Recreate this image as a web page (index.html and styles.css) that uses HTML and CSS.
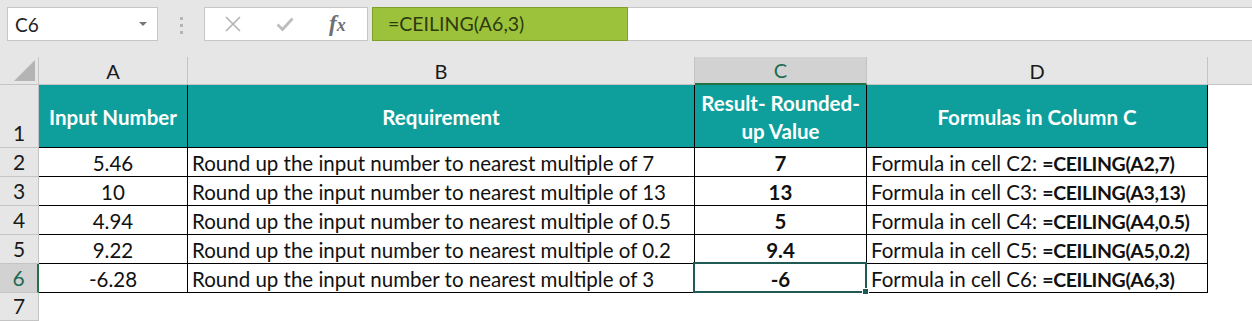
FILE: index.html
```html
<!DOCTYPE html>
<html lang="en">
<head>
    <meta charset="UTF-8">
    <meta name="viewport" content="width=device-width, initial-scale=1.0">
    <title>CEILING examples</title>
    <link rel="stylesheet" href="styles.css">
</head>
<body>
    <!-- Name box and formula bar -->
    <header class="toolbar">
        <div class="namebox">
            <span>C6</span>
            <span class="caret"></span>
        </div>
        <div class="grip"><i></i><i></i><i></i></div>
        <div class="fx-buttons">
            <svg class="icon" width="18" height="18" viewBox="0 0 18 18">
                <path d="M2 2 L16 16 M16 2 L2 16" stroke="#b3b3b3" stroke-width="1.6" fill="none"/>
            </svg>
            <svg class="icon" width="18" height="18" viewBox="0 0 18 18">
                <path d="M1.5 9.5 L6.5 14.5 L16.5 3.5" stroke="#bdbdbd" stroke-width="2.8" fill="none"/>
            </svg>
            <span class="fx">f<sub>x</sub></span>
        </div>
        <div class="formula">
            <div class="formula-text">=CEILING(A6,3)</div>
            <div class="formula-rest"></div>
        </div>
    </header>

    <!-- Worksheet -->
    <main class="sheet">
        <div class="corner"><span class="corner-tri"></span></div>
        <div class="col-head">A</div>
        <div class="col-head">B</div>
        <div class="col-head active">C</div>
        <div class="col-head">D</div>
        <div class="col-head last"></div>

        <div class="row-head">1</div>
        <div class="cell title">Input Number</div>
        <div class="cell title">Requirement</div>
        <div class="cell title wrap">Result- Rounded-<br>up Value</div>
        <div class="cell title">Formulas in Column C</div>
        <div class="cell blank"></div>

        <div class="row-head">2</div>
        <div class="cell num">5.46</div>
        <div class="cell text">Round up the input number to nearest multiple of 7</div>
        <div class="cell result">7</div>
        <div class="cell text">Formula in cell C2: <b>=CEILING(A2,7)</b></div>
        <div class="cell blank"></div>

        <div class="row-head">3</div>
        <div class="cell num">10</div>
        <div class="cell text">Round up the input number to nearest multiple of 13</div>
        <div class="cell result">13</div>
        <div class="cell text">Formula in cell C3: <b>=CEILING(A3,13)</b></div>
        <div class="cell blank"></div>

        <div class="row-head">4</div>
        <div class="cell num">4.94</div>
        <div class="cell text">Round up the input number to nearest multiple of 0.5</div>
        <div class="cell result">5</div>
        <div class="cell text">Formula in cell C4: <b>=CEILING(A4,0.5)</b></div>
        <div class="cell blank"></div>

        <div class="row-head">5</div>
        <div class="cell num">9.22</div>
        <div class="cell text">Round up the input number to nearest multiple of 0.2</div>
        <div class="cell result">9.4</div>
        <div class="cell text">Formula in cell C5: <b>=CEILING(A5,0.2)</b></div>
        <div class="cell blank"></div>

        <div class="row-head active">6</div>
        <div class="cell num">-6.28</div>
        <div class="cell text">Round up the input number to nearest multiple of 3</div>
        <div class="cell result selected">-6<span class="handle"></span></div>
        <div class="cell text">Formula in cell C6: <b>=CEILING(A6,3)</b></div>
        <div class="cell blank"></div>

        <div class="row-head">7</div>
        <div class="cell blank"></div>
        <div class="cell blank"></div>
        <div class="cell blank"></div>
        <div class="cell blank"></div>
        <div class="cell blank"></div>
    </main>
</body>
</html>
```

FILE: styles.css
```css
/* Global */
body {
    margin: 0;
    background-color: #e6e6e6;
    font-family: Lato, "Open Sans", sans-serif;
    color: #111;
    overflow: hidden;
}

/* Toolbar */
.toolbar {
    display: flex;
    align-items: flex-start;
    height: 57px;
    padding: 7px 0 0 7px;
    box-sizing: border-box;
}

.namebox {
    display: flex;
    align-items: center;
    justify-content: space-between;
    width: 151px;
    height: 34px;
    box-sizing: border-box;
    padding: 0 10px 0 7px;
    background-color: white;
    border: 1px solid #c6c6c6;
    font-size: 19px;
    color: #222;
}

.caret {
    width: 0;
    height: 0;
    border-left: 4px solid transparent;
    border-right: 4px solid transparent;
    border-top: 4px solid #777;
}

.grip {
    display: flex;
    flex-direction: column;
    align-items: center;
    gap: 4px;
    width: 46px;
    padding-top: 10px;
}

.grip i {
    width: 3px;
    height: 3px;
    background-color: #b5b5b5;
}

.fx-buttons {
    display: flex;
    align-items: center;
    width: 164px;
    height: 34px;
    box-sizing: border-box;
    background-color: white;
    border: 1px solid #c6c6c6;
    padding-left: 19px;
}

.icon {
    margin-right: 34px;
}

.fx {
    font-family: "Liberation Serif", serif;
    font-style: italic;
    font-weight: bold;
    font-size: 23px;
    color: #6f6f6f;
    margin-left: 1px;
}

.fx sub {
    font-size: 18px;
    vertical-align: 0;
}

.formula {
    display: flex;
    flex: 1;
    height: 34px;
    margin-left: 4px;
}

.formula-text {
    width: 256px;
    box-sizing: border-box;
    padding-left: 15px;
    line-height: 32px;
    font-size: 19.5px;
    color: #2c3a0d;
    background-color: #9cc23b;
    border: 1px solid #7ea22c;
}

.formula-rest {
    flex: 1;
    background-color: white;
    border-top: 1px solid #c6c6c6;
    border-bottom: 1px solid #c6c6c6;
}

/* Sheet grid */
.sheet {
    display: grid;
    grid-template-columns: 39px 149px 507px 172px 341px 1fr;
    grid-template-rows: 28px 63px repeat(5, 29px) 28px;
    background-color: white;
}

.corner,
.col-head,
.row-head {
    background-color: #e6e6e6;
    box-sizing: border-box;
    color: #1a1a1a;
}

.corner {
    position: relative;
    border-right: 1px solid #c4c4c4;
    border-bottom: 1px solid #c4c4c4;
}

.corner-tri {
    position: absolute;
    right: 3px;
    bottom: 3px;
    width: 0;
    height: 0;
    border-left: 21px solid transparent;
    border-bottom: 21px solid #b4b4b4;
}

.col-head {
    display: flex;
    align-items: center;
    justify-content: center;
    font-size: 20px;
    border-right: 1px solid #c4c4c4;
    border-bottom: 1px solid #c4c4c4;
}

.col-head.active {
    background-color: #d2d2d2;
    color: #1d6b52;
    border-bottom: 2px solid #217346;
}

.col-head.last {
    border-right: none;
}

.row-head {
    display: flex;
    align-items: flex-end;
    justify-content: center;
    padding-bottom: 2px;
    font-size: 21px;
    border-right: 1px solid #c4c4c4;
    border-bottom: 1px solid #c4c4c4;
}

.row-head.active {
    background-color: #d2d2d2;
    color: #1d6b52;
    border-right: 2px solid #217346;
}

/* Cells */
.cell {
    display: flex;
    align-items: center;
    box-sizing: border-box;
    padding-top: 2px;
    font-size: 20.5px;
    white-space: nowrap;
    border-right: 1px solid #000;
    border-bottom: 1px solid #000;
}

.cell.title {
    justify-content: center;
    background-color: #0e9f9c;
    color: white;
    font-weight: bold;
}

.cell.wrap {
    text-align: center;
    line-height: 28px;
}

.cell.num,
.cell.result {
    justify-content: center;
}

.cell.result {
    font-weight: bold;
}

.cell.text {
    padding-left: 4px;
    white-space: pre;
}

.cell.text b {
    font-size: 19.5px;
    letter-spacing: -0.4px;
}

.cell.blank {
    border: none;
}

.cell.selected {
    position: relative;
}

.cell.selected::after {
    content: "";
    position: absolute;
    top: -2px;
    left: -2px;
    right: -1px;
    bottom: -1px;
    border: 2px solid #1f5a54;
}

.handle {
    position: absolute;
    right: -3px;
    bottom: -3px;
    width: 5px;
    height: 5px;
    background-color: #1f5a54;
    border: 1px solid white;
    z-index: 1;
}
```
